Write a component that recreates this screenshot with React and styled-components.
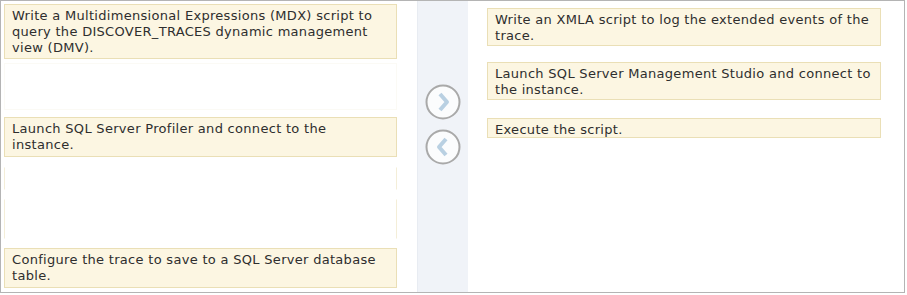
import React from 'react'
import styled, { createGlobalStyle } from 'styled-components'

const GlobalStyle = createGlobalStyle`
  body {
    margin: 0;
    background: #ffffff;
    font-family: "DejaVu Sans", Verdana, sans-serif;
  }
`

const leftSlots = [
  { text: 'Write a Multidimensional Expressions (MDX) script to query the DISCOVER_TRACES dynamic management view (DMV).', h: 55, mt: 3 },
  { text: '', h: 47, mt: 4, blank: true },
  { text: 'Launch SQL Server Profiler and connect to the instance.', h: 40, mt: 7 },
  { text: '', h: 23, mt: 10, faint: true },
  { text: '', h: 40, mt: 9, faint: true },
  { text: 'Configure the trace to save to a SQL Server database table.', h: 40, mt: 9 },
]

const rightSlots = [
  { text: 'Write an XMLA script to log the extended events of the trace.', h: 38, mt: 7 },
  { text: 'Launch SQL Server Management Studio and connect to the instance.', h: 38, mt: 16 },
  { text: 'Execute the script.', h: 20, mt: 18 },
]

const ArrowButton = ({ dir }) => (
  <Circle>
    <svg width="36" height="36" viewBox="0 0 36 36">
      <circle cx="18" cy="18" r="16.5" fill="#fbfcfd" stroke="#a9a9a9" strokeWidth="2" />
      {dir === 'right' ? (
        <path d="M15 10 L22 18 L15 26" fill="none" stroke="#b9d0e2" strokeWidth="4" strokeLinejoin="round" />
      ) : (
        <path d="M21 10 L14 18 L21 26" fill="none" stroke="#b9d0e2" strokeWidth="4" strokeLinejoin="round" />
      )}
    </svg>
  </Circle>
)

const App = () => {
  return (
    <>
      <GlobalStyle />
      <Frame>
        <LeftColumn>
          {leftSlots.map((s, i) => (
            <Slot key={i} h={s.h} mt={s.mt} blank={s.blank} faint={s.faint} padRight={17}>
              {s.text}
            </Slot>
          ))}
        </LeftColumn>
        <Middle>
          <ArrowButton dir="right" />
          <ArrowButton dir="left" />
        </Middle>
        <RightColumn>
          {rightSlots.map((s, i) => (
            <Slot key={i} h={s.h} mt={s.mt} padRight={5}>
              {s.text}
            </Slot>
          ))}
        </RightColumn>
      </Frame>
    </>
  )
}

export default App

const Frame = styled.div`
  width: 903px;
  height: 291px;
  border: 1px solid #b4b4b4;
  display: flex;
  background: #ffffff;
`

const LeftColumn = styled.div`
  width: 416px;
  display: flex;
  flex-direction: column;
  padding: 0 20px 0 3px;
  box-sizing: border-box;
`

const RightColumn = styled.div`
  flex: 1;
  display: flex;
  flex-direction: column;
  padding: 0 23px 0 19px;
`

const Middle = styled.div`
  width: 51px;
  background: #f0f3f8;
  border-left: 1px solid #e8ecf2;
  display: flex;
  flex-direction: column;
  align-items: center;
  padding-top: 83px;
  gap: 9px;
  box-sizing: border-box;
`

const Circle = styled.div`
  width: 36px;
  height: 36px;
  svg {
    display: block;
  }
`

const Slot = styled.div`
  height: ${props => props.h}px;
  margin-top: ${props => props.mt}px;
  box-sizing: border-box;
  padding: 3px ${props => props.padRight}px 0 7px;
  font-size: 13px;
  letter-spacing: 0.3px;
  line-height: 16px;
  color: #2e2e2e;
  background: ${props => (props.blank || props.faint ? '#ffffff' : '#fcf6e2')};
  border: 1px solid
    ${props => (props.blank ? '#fbfaf5' : props.faint ? '#f4eed8' : '#eadfb6')};
  ${props => props.faint && 'border-top-color: #ffffff; border-bottom-color: #ffffff;'}
`
